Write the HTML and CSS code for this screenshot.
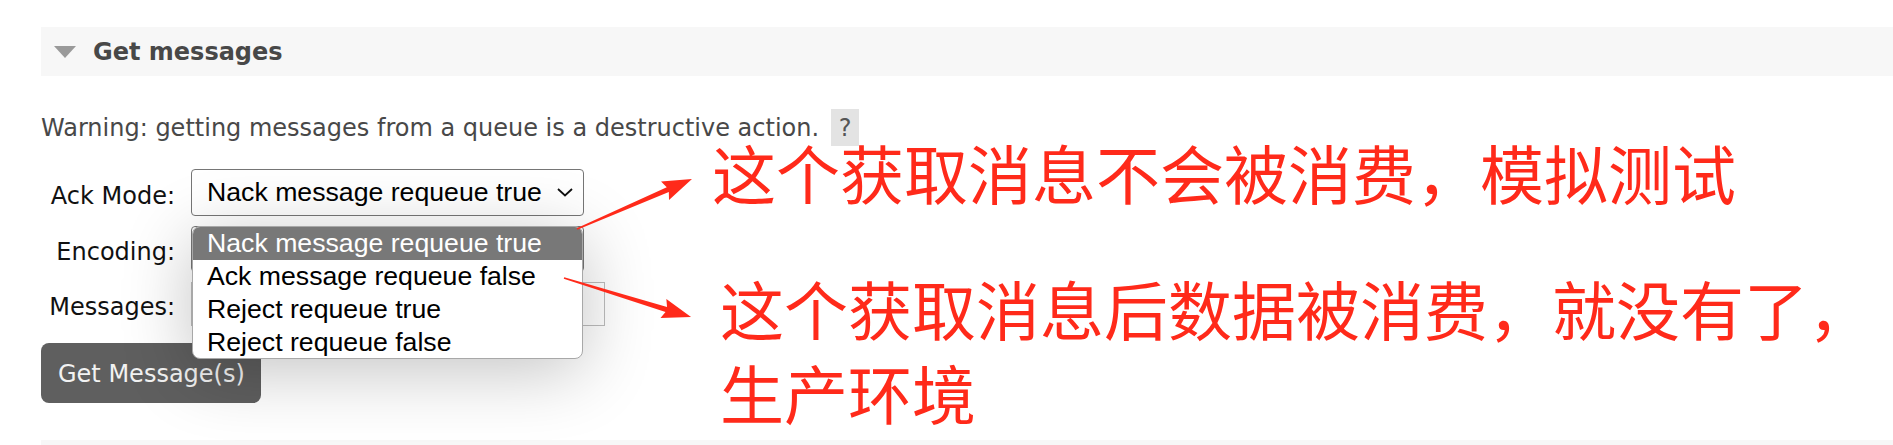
FILE: index.html
```html
<!DOCTYPE html>
<html lang="zh">
<head>
<meta charset="utf-8">
<title>Get messages</title>
<link rel="stylesheet" href="styles.css">
</head>
<body>
<div class="page">
  <section class="section">
    <h2 class="section-head"><span class="tri"></span>Get messages</h2>
    <p class="warning">Warning: getting messages from a queue is a destructive action. <span class="help">?</span></p>
    <form class="form">
      <div class="fields">
        <label class="label">Ack Mode:</label>
        <div class="select">Nack message requeue true
          <svg class="chev" width="16" height="9" viewBox="0 0 16 9"><polyline points="1,1 8,7.5 15,1" fill="none" stroke="#111" stroke-width="1.8"/></svg>
        </div>
        <label class="label">Encoding:</label>
        <div class="select enc"></div>
        <label class="label">Messages:</label>
        <div class="input"></div>
      </div>
      <button class="btn" type="button">Get Message(s)</button>
    </form>
  </section>
  <div class="next-bar"></div>
</div>

<ul class="dropdown">
  <li class="opt active">Nack message requeue true</li>
  <li class="opt">Ack message requeue false</li>
  <li class="opt">Reject requeue true</li>
  <li class="opt">Reject requeue false</li>
</ul>

<svg class="arrows" width="1893" height="445" viewBox="0 0 1893 445">
  <g transform="translate(577,229) rotate(-23.5)">
    <polygon points="0,-0.8 99,-2.6 96,-10 125.4,0 96,10 99,2.6 0,0.8" fill="#ff2a1a"/>
  </g>
  <g transform="translate(564,278) rotate(17.07)">
    <polygon points="0,-0.8 107,-2.6 104,-10 132.9,0 104,10 107,2.6 0,0.8" fill="#ff2a1a"/>
  </g>
</svg>

<div class="note note-1">这个获取消息不会被消费，模拟测试</div>
<div class="note note-2">这个获取消息后数据被消费，就没有了，<br>生产环境</div>
</body>
</html>
```

FILE: styles.css
```css
* { box-sizing: border-box; }
html, body { margin: 0; padding: 0; background: #fff; }
body {
  font-family: "DejaVu Sans", Verdana, sans-serif;
  font-size: 24px;
  color: #484848;
  width: 1893px;
  height: 445px;
  overflow: hidden;
  position: relative;
}
.page { padding: 27px 0 0 41px; }
.section-head {
  margin: 0;
  height: 49px;
  background: #f7f7f7;
  display: flex;
  align-items: center;
  padding-left: 13px;
  gap: 17px;
  font-size: 24px;
  font-weight: bold;
  color: #484848;
}
.tri {
  width: 0;
  height: 0;
  border-left: 11px solid transparent;
  border-right: 11px solid transparent;
  border-top: 12px solid #9a9a9a;
}
.warning { margin: 38px 0 0; line-height: 28px; }
.help {
  display: inline-block;
  margin: -5px 0 -4px 4px;
  padding: 5px 8px 4px;
  background: #e3e3e3;
  color: #555;
  line-height: 28px;
}
.form {
  margin-top: 27px;
  display: flex;
  flex-direction: column;
  align-items: flex-start;
}
.fields {
  display: grid;
  grid-template-columns: 134px auto;
  column-gap: 16px;
  row-gap: 10px;
  align-items: center;
}
.label {
  text-align: right;
  color: #111;
  white-space: nowrap;
  line-height: 28px;
  padding-top: 6px;
}
.select {
  width: 393px;
  height: 47px;
  border: 1px solid #767676;
  border-radius: 4px;
  display: flex;
  align-items: center;
  justify-content: space-between;
  padding: 0 10px 0 15px;
  font-family: "Liberation Sans", Arial, sans-serif;
  font-size: 26.67px;
  color: #000;
  background: #fff;
}
.select.enc { height: 46px; }
.chev { flex: none; }
.input {
  width: 414px;
  height: 44px;
  border: 1px solid #bdbdbd;
  background: #fff;
}
.btn {
  margin-top: 17px;
  width: 220px;
  height: 60px;
  border: none;
  border-radius: 8px;
  background: #5f5f5f;
  color: #f2f2f2;
  font-family: "DejaVu Sans", Verdana, sans-serif;
  font-size: 24px;
  text-align: left;
  padding: 2px 0 0 17px;
}
.next-bar { margin-top: 37px; height: 5px; background: #f7f7f7; }

.dropdown {
  position: absolute;
  left: 192px;
  top: 226px;
  width: 391px;
  height: 133px;
  margin: 0;
  padding: 0;
  list-style: none;
  background: #fff;
  border: 1px solid #a8a8a8;
  border-radius: 8px;
  box-shadow: 0 12px 70px rgba(0, 0, 0, 0.24);
  overflow: hidden;
  font-family: "Liberation Sans", Arial, sans-serif;
  font-size: 26.67px;
  color: #000;
}
.opt { height: 33px; line-height: 33px; padding-left: 14px; white-space: nowrap; }
.opt.active { background: #787878; color: #fff; }

.arrows { position: absolute; left: 0; top: 0; pointer-events: none; }
.note {
  position: absolute;
  font-family: "Noto Sans CJK SC", sans-serif;
  font-size: 64px;
  color: #ff2a1a;
  white-space: nowrap;
}
.note-1 { left: 712px; top: 146px; line-height: 50px; }
.note-2 { left: 720px; top: 265px; line-height: 84px; }
```
